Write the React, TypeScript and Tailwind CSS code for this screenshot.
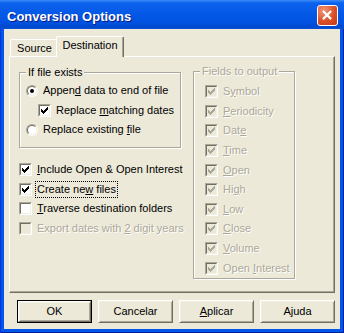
import React from 'react';

// Windows-style "&" access keys: "&x" underlines x, "&&" is a literal ampersand
const Label: React.FC<{ text: string }> = ({ text }) => {
    const out: React.ReactNode[] = [];
    let buf = '';
    for (let i = 0; i < text.length; i++) {
        const c = text[i];
        if (c === '&' && text[i + 1] === '&') {
            buf += '&';
            i++;
        } else if (c === '&') {
            if (buf) out.push(buf);
            buf = '';
            out.push(<u key={i} className="underline underline-offset-[1px]">{text[i + 1]}</u>);
            i++;
        } else {
            buf += c;
        }
    }
    if (buf) out.push(buf);
    return <>{out}</>;
};

const CheckMark: React.FC<{ color: string }> = ({ color }) => (
    <svg width="7" height="7" viewBox="0 0 7 7" shapeRendering="crispEdges" fill={color}>
        <path d="M6 0h1v1h-1zM5 1h2v1h-2zM0 2h1v1h-1zM4 2h3v1h-3zM0 3h2v1h-2zM3 3h3v1h-3zM0 4h5v1h-5zM1 5h3v1h-3zM2 6h1v1h-1z" />
    </svg>
);

const CheckBox: React.FC<{ checked?: boolean; disabled?: boolean }> = ({ checked, disabled }) => (
    <span className="flex h-[13px] w-[13px] shrink-0 border border-t-[#ACA899] border-l-[#ACA899] border-r-white border-b-white">
        <span
            className={`flex flex-1 items-center justify-center border border-t-[#716F64] border-l-[#716F64] border-r-[#F1EFE2] border-b-[#F1EFE2] ${disabled ? 'bg-[#ECE9D8]' : 'bg-white'}`}
        >
            {checked && <CheckMark color={disabled ? '#ACA899' : '#000'} />}
        </span>
    </span>
);

const Radio: React.FC<{ checked?: boolean }> = ({ checked }) => (
    <span className="flex h-[12px] w-[12px] shrink-0 rounded-full border border-t-[#ACA899] border-l-[#ACA899] border-r-white border-b-white">
        <span className="flex flex-1 items-center justify-center rounded-full border border-t-[#716F64] border-l-[#716F64] border-r-[#F1EFE2] border-b-[#F1EFE2] bg-white">
            {checked && <span className="h-[4px] w-[4px] rounded-full bg-black" />}
        </span>
    </span>
);

const CheckRow: React.FC<{ text: string; checked?: boolean; disabled?: boolean; focus?: boolean; indent?: boolean }> = ({
    text,
    checked,
    disabled,
    focus,
    indent,
}) => (
    <div className={`flex h-[19.6px] items-center gap-[5px] ${indent ? 'pl-[12px]' : ''}`}>
        <CheckBox checked={checked} disabled={disabled} />
        <span
            className={`whitespace-nowrap ${disabled ? 'text-[#ACA899] [text-shadow:1px_1px_0_#fff]' : ''} ${focus ? '-mx-px inline-block px-px leading-[15px] [outline:1px_dotted_#000]' : ''}`}
        >
            <Label text={text} />
        </span>
    </div>
);

const RadioRow: React.FC<{ text: string; checked?: boolean }> = ({ text, checked }) => (
    <div className="flex h-[19.6px] items-center gap-[5px]">
        <Radio checked={checked} />
        <span className="whitespace-nowrap">
            <Label text={text} />
        </span>
    </div>
);

const GroupLabel: React.FC<{ text: string; disabled?: boolean }> = ({ text, disabled }) => (
    <span
        className={`absolute -top-[7px] left-[6px] bg-[#ECE9D8] px-[2px] leading-[13px] whitespace-nowrap ${disabled ? 'text-[#ACA899] [text-shadow:1px_1px_0_#fff]' : ''}`}
    >
        {text}
    </span>
);

const Button: React.FC<{ text: string; isDefault?: boolean }> = ({ text, isDefault }) => (
    <div className={`h-[23px] w-[75px] ${isDefault ? 'border border-black' : ''}`}>
        <div className="flex h-full w-full items-center justify-center border border-t-white border-l-white border-r-[#716F64] border-b-[#716F64] shadow-[inset_1px_1px_0_#F1EFE2,inset_-1px_-1px_0_#ACA899]">
            <Label text={text} />
        </div>
    </div>
);

const fields = ['S&ymbol', '&Periodicity', 'Dat&e', '&Time', '&Open', 'Hi&gh', '&Low', '&Close', '&Volume', 'Open &Interest'];

const App: React.FC = () => {
    return (
        <div className="flex h-[333px] w-[344px] flex-col bg-[#0055EA] text-[11px] leading-[13px] text-black [font-family:'Liberation_Sans',Arial,sans-serif] shadow-[inset_1px_0_0_#0831D9,inset_-1px_0_0_#001EA0,inset_0_-1px_0_#001EA0]">
            {/* title bar */}
            <div className="flex h-[29px] shrink-0 items-center justify-between bg-[linear-gradient(180deg,#3B8DF8_0%,#0D62EC_10%,#0559E7_45%,#0051DF_80%,#0047CC_93%,#0A53D6_100%)] pl-[7px] pr-[6px]">
                <span className="mt-[4px] text-[13px] font-bold leading-[13px] text-white [text-shadow:1px_1px_0_#0A1883]">
                    Conversion Options
                </span>
                <button className="mt-[2px] flex h-[21px] w-[21px] items-center justify-center rounded-[3px] border border-white bg-[radial-gradient(circle_at_30%_25%,#F09878,#DC5028_55%,#C23A18)]">
                    <svg width="21" height="21" viewBox="0 0 21 21">
                        <path d="M5.5 5.5L14.5 14.5M14.5 5.5L5.5 14.5" stroke="#fff" strokeWidth="2.4" />
                    </svg>
                </button>
            </div>

            {/* body */}
            <div className="mx-[4px] mb-[4px] flex h-[300px] flex-col bg-[#ECE9D8] pt-[7px]">
                {/* tabs */}
                <div className="flex h-[21px] items-end pl-[6px]">
                    <div className="flex h-[18px] w-[48px] justify-center rounded-t-[2px] border-t border-l border-t-white border-l-white pt-[2px]">
                        Source
                    </div>
                    <div className="relative z-10 -ml-[2px] flex h-[21px] w-[68px] justify-center rounded-t-[2px] border-t border-l border-r border-t-white border-l-white border-r-[#716F64] bg-[#ECE9D8] pt-[2px] shadow-[inset_-1px_0_0_#ACA899]">
                        Destination
                    </div>
                </div>

                {/* panel */}
                <div className="mx-[5px] -mt-px flex h-[237px] border border-t-white border-l-white border-r-[#716F64] border-b-[#716F64] pl-[9px] shadow-[inset_-1px_-1px_0_#ACA899]">
                    <div className="flex w-[162px] flex-col">
                        <div className="relative mt-[15px] border border-[#ACA899] pt-[8px] pb-[7px] pl-[6px] shadow-[inset_1px_1px_0_#fff,1px_1px_0_#fff]">
                            <GroupLabel text="If file exists" />
                            <RadioRow text="Appen&d data to end of file" checked />
                            <CheckRow text="Replace &matching dates" checked indent />
                            <RadioRow text="Replace existing &file" />
                        </div>
                        <div className="mt-[12px] flex flex-col">
                            <CheckRow text="&Include Open && Open Interest" checked />
                            <CheckRow text="Create ne&w files" checked focus />
                            <CheckRow text="&Traverse destination folders" />
                            <CheckRow text="Export dates with &2 digit years" disabled />
                        </div>
                    </div>

                    <div className="relative ml-[12px] mt-[14px] h-[208px] w-[102px] border border-[#ACA899] pt-[10px] pl-[11px] shadow-[inset_1px_1px_0_#fff,1px_1px_0_#fff]">
                        <GroupLabel text="Fields to output" disabled />
                        {fields.map((f) => (
                            <CheckRow key={f} text={f} checked disabled />
                        ))}
                    </div>
                </div>

                {/* buttons */}
                <div className="mt-[7px] mr-[5px] flex justify-end gap-[6px]">
                    <Button text="OK" isDefault />
                    <Button text="Cancelar" />
                    <Button text="&Aplicar" />
                    <Button text="Ajuda" />
                </div>
            </div>
        </div>
    );
};

export default App;
